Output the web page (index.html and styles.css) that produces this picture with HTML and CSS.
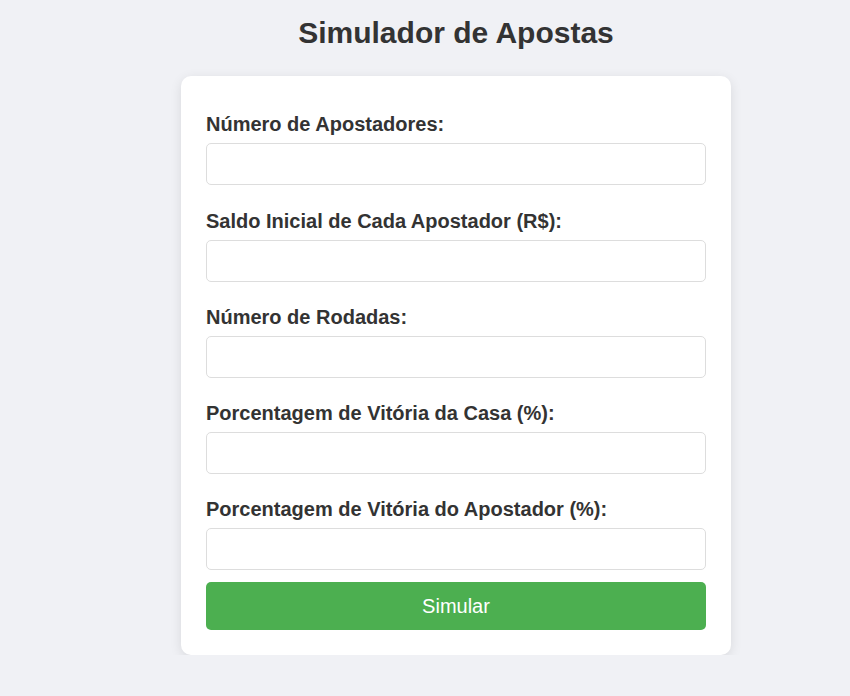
FILE: index.html
```html
<!DOCTYPE html>
<html lang="pt-BR">
<head>
<meta charset="utf-8">
<title>Simulador de Apostas</title>
<link rel="stylesheet" href="styles.css">
</head>
<body>
<div class="page">
  <h1 class="title">Simulador de Apostas</h1>
  <form class="card">
    <label class="label" for="a">Número de Apostadores:</label>
    <input class="field" id="a" type="number">
    <label class="label" for="b">Saldo Inicial de Cada Apostador (R$):</label>
    <input class="field" id="b" type="number">
    <label class="label" for="c">Número de Rodadas:</label>
    <input class="field" id="c" type="number">
    <label class="label" for="d">Porcentagem de Vitória da Casa (%):</label>
    <input class="field" id="d" type="number">
    <label class="label" for="e">Porcentagem de Vitória do Apostador (%):</label>
    <input class="field" id="e" type="number">
    <button class="btn" type="button">Simular</button>
  </form>
</div>
</body>
</html>
```
FILE: styles.css
```css
html, body {
  margin: 0;
  padding: 0;
  background: #f0f1f5;
  font-family: "Liberation Sans", Arial, sans-serif;
  color: #333;
}
.page {
  width: 550px;
  margin-left: 181px;
  padding-top: 13px;
}
.title {
  margin: 0 0 23px;
  text-align: center;
  font-size: 30px;
  line-height: 40px;
  font-weight: bold;
}
.card {
  background: #fff;
  border-radius: 10px;
  box-shadow: 0 3px 12px rgba(0, 0, 0, 0.1);
  padding: 13px 25px 25px;
  display: flex;
  flex-direction: column;
}
.label {
  display: block;
  font-size: 20px;
  line-height: 23px;
  font-weight: bold;
  margin: 24.25px 0 7px;
}
.field {
  box-sizing: border-box;
  width: 100%;
  height: 42px;
  margin: 0;
  border: 1px solid #ddd;
  border-radius: 5px;
  background: #fff;
  padding: 10px;
  font-size: 16px;
}
.btn {
  margin-top: 12px;
  height: 48px;
  border: none;
  border-radius: 5px;
  background: #4caf50;
  color: #fff;
  font-family: "Liberation Sans", Arial, sans-serif;
  font-size: 20px;
}
```
